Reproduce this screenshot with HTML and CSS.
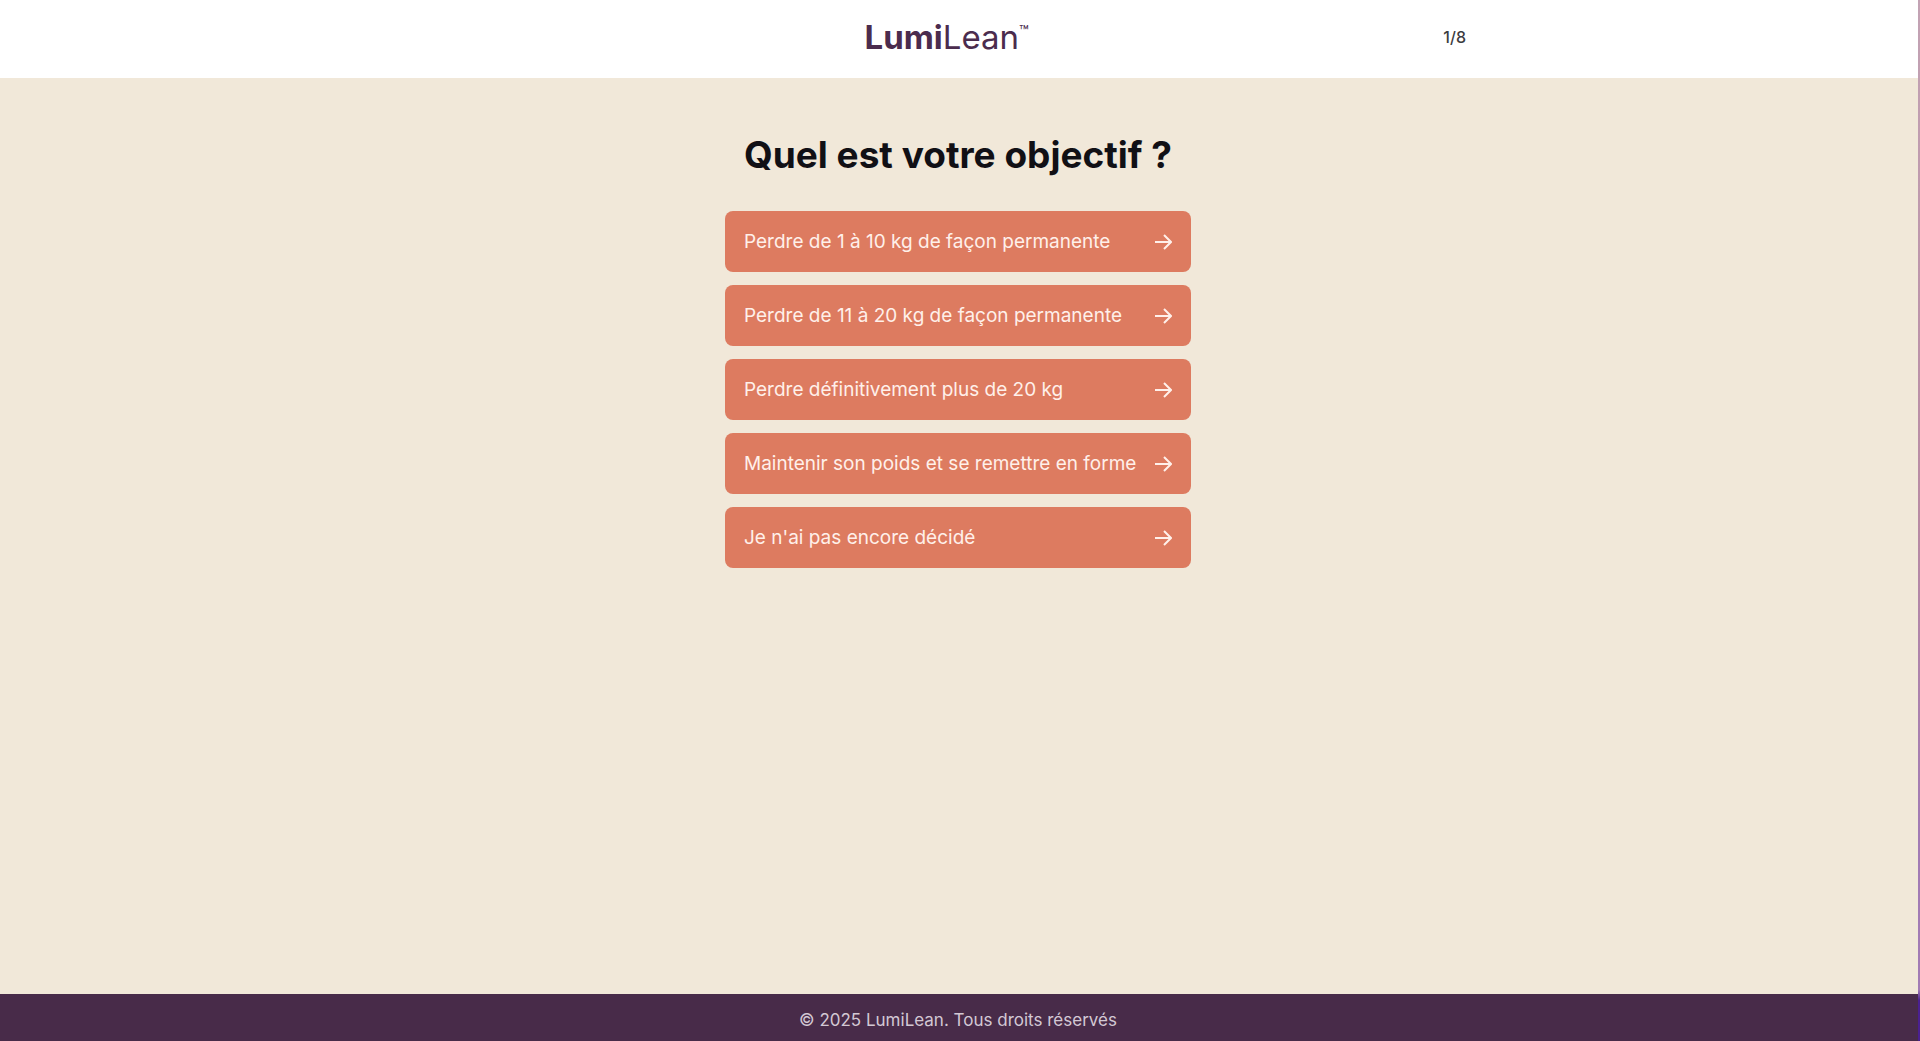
FILE: index.html
```html
<!DOCTYPE html>
<html lang="fr">
<head>
<meta charset="utf-8">
<meta name="viewport" content="width=device-width, initial-scale=1">
<title>LumiLean</title>
<link rel="stylesheet" href="styles.css">
</head>
<body>
<svg class="symbols" aria-hidden="true">
  <symbol id="arrow" viewBox="0 0 18 18">
    <path d="M1 9H17M10 2L17 9L10 16" fill="none" stroke="currentColor" stroke-width="2"/>
  </symbol>
</svg>
<header class="header">
  <div class="header-inner">
    <span></span>
    <div class="logo"><b>Lumi</b>Lean<sup class="logo-tm">™</sup></div>
    <span class="step">1/8</span>
  </div>
</header>
<main class="quiz">
  <h1 class="title">Quel est votre objectif ?</h1>
  <div class="options">
    <button class="option" type="button">Perdre de 1 à 10 kg de façon permanente<svg class="arrow" aria-hidden="true"><use href="#arrow"/></svg></button>
    <button class="option" type="button">Perdre de 11 à 20 kg de façon permanente<svg class="arrow" aria-hidden="true"><use href="#arrow"/></svg></button>
    <button class="option" type="button">Perdre définitivement plus de 20 kg<svg class="arrow" aria-hidden="true"><use href="#arrow"/></svg></button>
    <button class="option" type="button">Maintenir son poids et se remettre en forme<svg class="arrow" aria-hidden="true"><use href="#arrow"/></svg></button>
    <button class="option" type="button">Je n'ai pas encore décidé<svg class="arrow" aria-hidden="true"><use href="#arrow"/></svg></button>
  </div>
</main>
<footer class="footer">© 2025 LumiLean. Tous droits réservés</footer>
</body>
</html>
```

FILE: styles.css
```css
* {
  box-sizing: border-box;
}

body {
  display: flex;
  flex-direction: column;
  min-height: 100vh;
  margin: 0;
  padding-right: 2px;
  border-right: 2px solid;
  border-image: linear-gradient(#c3a3b4, #b98ba4 50%, #a27bb5 80%, #a27bb5 95%, #4a2090 96%) 1;
  background: #f1e8d9;
  color: #111015;
  font-family: Inter, "Liberation Sans", sans-serif;
}

.symbols {
  display: none;
}

.header,
.footer {
  margin-right: -2px;
  padding-right: 2px;
}

.header {
  background: #fff;
}

.header-inner {
  display: flex;
  align-items: center;
  justify-content: space-between;
  max-width: 1016px;
  height: 78px;
  margin: 0 auto;
  padding-bottom: 5px;
}

.logo {
  color: #4b2c4e;
  font-size: 33px;
  line-height: 38px;
  white-space: nowrap;
}

.logo-tm {
  font-size: 16px;
  line-height: 16px;
  vertical-align: 12px;
}

.step {
  color: #3c3c3f;
  font-size: 16px;
  font-weight: 500;
}

.quiz {
  flex: 1;
  width: 100%;
  max-width: 466px;
  margin: 0 auto;
  padding: 53px 0;
}

.title {
  margin: 0 0 32px;
  font-size: 37px;
  font-weight: 700;
  line-height: 48px;
  text-align: center;
}

.options {
  display: flex;
  flex-direction: column;
  gap: 13px;
}

.option {
  display: flex;
  align-items: center;
  justify-content: space-between;
  min-height: 61px;
  padding: 0 19px;
  border: 0;
  border-radius: 8px;
  background: #dd7b60;
  color: #fff0ea;
  font: 400 19px/24px Inter, "Liberation Sans", sans-serif;
  text-align: left;
  cursor: pointer;
}

.arrow {
  flex: none;
  width: 18px;
  height: 18px;
}

.footer {
  padding-top: 16px;
  padding-bottom: 11px;
  background: #482b49;
  color: #d3c8d4;
  font-size: 17px;
  line-height: 20px;
  text-align: center;
}
```
